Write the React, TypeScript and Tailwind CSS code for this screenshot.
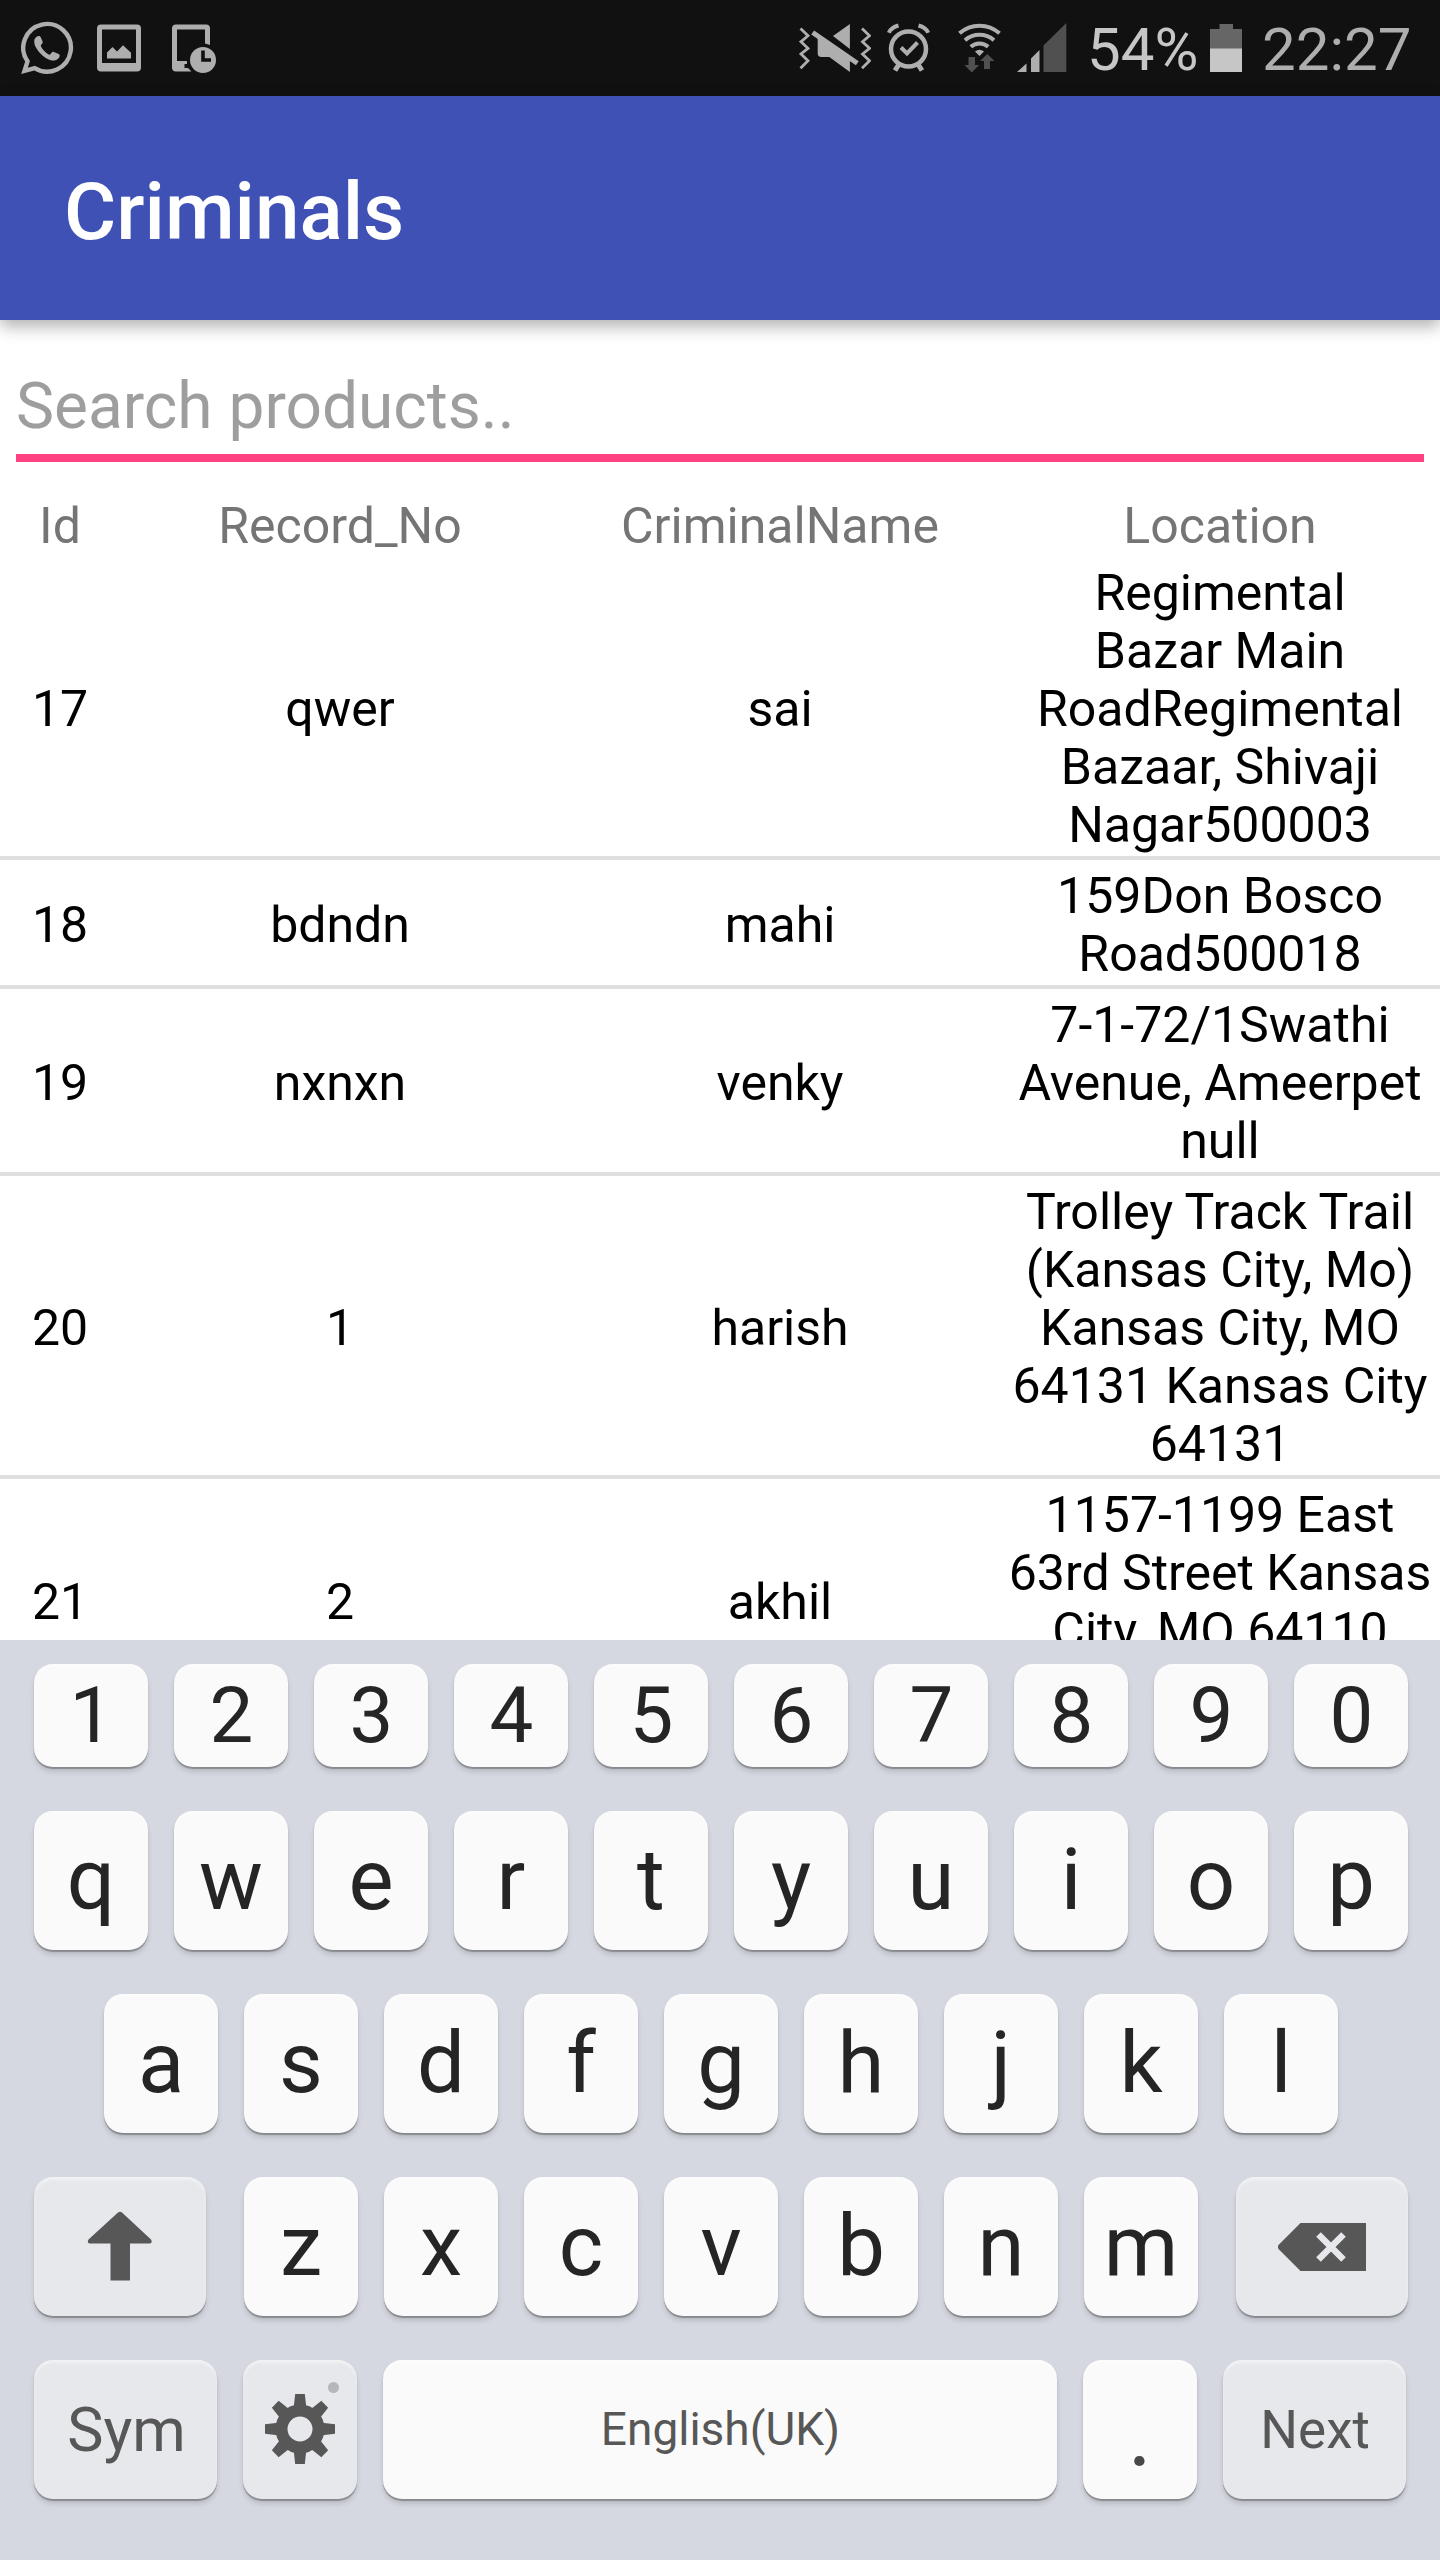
import React from "react";

const GREY = "#aeaeae";
const DIM = "#505050";

function WhatsappIcon() {
  return (
    <svg className="h-[54px] w-[54px]" viewBox="0 0 54 54" fill="none">
      <path
        d="M6.500 40.300A23.800 23.800 0 1 1 13.700 47.100L3.500 49.800Z"
        stroke={GREY}
        strokeWidth="4.400"
      />
      <path
        transform="translate(-0.7 1)"
        d="M16 15c-3 2-2.500 7 0 11 3.500 6 9 10.500 14.500 12.300 3.500 1 8.500-.8 8.900-4.600.1-1-.7-1.600-1.600-2l-4.300-1.700c-1.300-.5-2 .5-3 1.800-.8 1-1.500 1.100-2.600.4-3.300-2-6-5-7.200-7.700-.5-1.100.2-1.900 1-2.800.7-.8.900-1.600.5-2.500l-1.800-4c-.9-1.800-3-1.300-4.400-.2Z"
        fill={GREY}
      />
    </svg>
  );
}

function PictureIcon() {
  return (
    <svg className="h-[48px] w-[44px]" viewBox="0 0 44 48" fill={GREY}>
      <path
        fillRule="evenodd"
        d="M4 .5h36a4 4 0 0 1 4 4v39a4 4 0 0 1-4 4H4a4 4 0 0 1-4-4V4.500a4 4 0 0 1 4-4ZM5 5.500v33.500h34V5.500Z"
      />
      <path d="M10 28.500l5.500-5.500 4.500 4.500 6-6.300 8 7.500V34.500H10Z" />
    </svg>
  );
}

function DeviceClockIcon() {
  return (
    <svg className="h-[50px] w-[46px]" viewBox="0 0 46 50" fill={GREY}>
      <path d="M4 1.500h30a4 4 0 0 1 4 4v16.500l-5-1.500V6.500H5V38h10v3h-2.500v4H16l3.500 3.500H4a4 4 0 0 1-4-4v-39a4 4 0 0 1 4-4Z" />
      <circle cx="31" cy="37" r="13" />
      <path d="M31 27.500v9.500h8" fill="none" stroke="#111" strokeWidth="3.600" />
    </svg>
  );
}

function MuteIcon() {
  return (
    <svg className="h-[50px] w-[72px]" viewBox="0 0 72 50" fill={GREY}>
      <path
        d="M1.500 4.500 9 11.700 2 17.700 9 24.300 2 30 9 36.700 1.500 44.300M63 4.500 70.500 11.700 63.500 17.700 70.500 24.300 63.500 30 70.500 36.700 63 44.300"
        fill="none"
        stroke={GREY}
        strokeWidth="2.800"
      />
      <path d="M50.900 0v25L34 12Z" />
      <path d="M13.700 8.500 58.300 39.300" stroke={GREY} strokeWidth="5" />
      <path d="M18.700 14.500 21 12 50.900 34V48L30.300 33H22.500q-3.800 0-3.800-3.800Z" />
    </svg>
  );
}

function AlarmIcon() {
  return (
    <svg className="h-[50px] w-[44px]" viewBox="0 0 44 50" fill="none" stroke={GREY}>
      <circle cx="21.500" cy="26" r="17.500" strokeWidth="4.500" />
      <path d="M14 24.500l6 6 10.500-11" strokeWidth="4" />
      <path d="M1.800 9.800Q4 4.500 11.500 2.500M31.500 2.500Q39 4.500 41.200 9.800" strokeWidth="4" />
      <path d="M11.500 42l-3.500 5.500M31.500 42l3.500 5.500" strokeWidth="5" />
    </svg>
  );
}

function WifiIcon() {
  return (
    <svg className="h-[50px] w-[44px]" viewBox="0 0 44 50" fill="none" stroke={GREY}>
      <path d="M1.500 10.300a30 30 0 0 1 40 0" strokeWidth="4" />
      <path d="M7 17.300a22 22 0 0 1 29 0" strokeWidth="4" />
      <path d="M12.800 23.800a13 13 0 0 1 17.400 0" strokeWidth="4" />
      <path d="M17 28.500q4.500-3.500 9 0l-4.500 4.500Z" fill={GREY} stroke="none" />
      <path
        d="M10.500 34h6.500v8h4l-7.200 7.500L6.500 42h4ZM26 46h6V38h4.500L29.300 31 22 38h4Z"
        fill={DIM}
        stroke="none"
      />
    </svg>
  );
}

function SignalIcon() {
  return (
    <svg className="h-[49px] w-[50px]" viewBox="0 0 50 49">
      <path d="M0 49 9.500 40.500V49ZM14 35.500 22.500 27V49H14Z" fill={GREY} />
      <path d="M26.500 22.500 49.300 0V49H26.500Z" fill={DIM} />
    </svg>
  );
}

function BatteryIcon() {
  return (
    <svg className="h-[48px] w-[32px]" viewBox="0 0 32 48">
      <path d="M9.500 0h13.500v5h9v20H0V5h9.500Z" fill="#666" />
      <path d="M0 24.500h32V48H0Z" fill="#c6c6c6" />
    </svg>
  );
}

function StatusBar() {
  return (
    <div className="flex h-[96px] shrink-0 items-start bg-[#111] pl-[21px]">
      <div className="flex pt-[21px]">
        <WhatsappIcon />
      </div>
      <div className="ml-[22px] pt-[24px]">
        <PictureIcon />
      </div>
      <div className="ml-[31px] pt-[23px]">
        <DeviceClockIcon />
      </div>
      <div className="ml-[581px] pt-[24px]">
        <MuteIcon />
      </div>
      <div className="ml-[16px] pt-[23px]">
        <AlarmIcon />
      </div>
      <div className="ml-[27px] pt-[23px]">
        <WifiIcon />
      </div>
      <div className="ml-[15px] pt-[23px]">
        <SignalIcon />
      </div>
      <span className="ml-[20px] w-[118px] pt-[15px] text-[60px] leading-[70px] whitespace-nowrap text-[#c6c6c6]">
        54%
      </span>
      <div className="ml-[5px] pt-[24px]">
        <BatteryIcon />
      </div>
      <span className="ml-[20px] pt-[15px] text-[60px] leading-[70px] whitespace-nowrap text-[#aeaeae]">
        22:27
      </span>
    </div>
  );
}

const records = [
  { id: "17", no: "qwer", name: "sai", loc: ["Regimental", "Bazar Main", "RoadRegimental", "Bazaar, Shivaji", "Nagar500003"] },
  { id: "18", no: "bdndn", name: "mahi", loc: ["159Don Bosco", "Road500018"] },
  { id: "19", no: "nxnxn", name: "venky", loc: ["7-1-72/1Swathi", "Avenue, Ameerpet", "null"] },
  { id: "20", no: "1", name: "harish", loc: ["Trolley Track Trail", "(Kansas City, Mo)", "Kansas City, MO", "64131 Kansas City", "64131"] },
  { id: "21", no: "2", name: "akhil", loc: ["1157-1199 East", "63rd Street Kansas", "City, MO 64110"], tall: true },
];

const COLS = "grid grid-cols-[120px_440px_440px_440px] items-center text-center";

function Key({
  children,
  size = "w-[114px] h-[139px]",
  tone = "bg-[#fafafa] text-[#252525]",
  text = "text-[85px] leading-[100px] pt-[19px]",
}: {
  children?: React.ReactNode;
  size?: string;
  tone?: string;
  text?: string;
}) {
  return (
    <div
      className={`flex shrink-0 items-start justify-center rounded-[19px] shadow-[0_2px_1px_rgba(0,0,0,0.28),0_5px_5px_rgba(0,0,0,0.12),inset_0_3px_3px_rgba(255,255,255,0.45)] ${size} ${tone} ${text}`}
    >
      {children}
    </div>
  );
}

const FN = "bg-[#e6e8ec] text-[#575757]";

function Keyboard() {
  return (
    <div className="z-10 flex h-[920px] shrink-0 flex-col bg-[#d5d8e0] pt-[24px] pl-[34px]">
      <div className="flex gap-[26px]">
        {"1234567890".split("").map((k) => (
          <Key key={k} size="w-[114px] h-[103px]" text="text-[78px] leading-[90px] pt-[7px] pl-[1px]">
            {k}
          </Key>
        ))}
      </div>
      <div className="mt-[44px] flex gap-[26px]">
        {"qwertyuiop".split("").map((k) => (
          <Key key={k}>{k}</Key>
        ))}
      </div>
      <div className="mt-[44px] ml-[70px] flex gap-[26px]">
        {"asdfghjkl".split("").map((k) => (
          <Key key={k}>{k}</Key>
        ))}
      </div>
      <div className="mt-[44px] flex gap-[38px]">
        <Key size="w-[172px] h-[139px]" tone={FN} text="pt-[34px]">
          <svg className="h-[70px] w-[66px]" viewBox="0 0 66 70" fill="#575757">
            <path d="M31 1.500Q33 0 35 1.500L64 28.500Q66 32 62.500 32.500H43V69.500H23.500V32.500H3Q-.5 32 1.500 28.500Z" />
          </svg>
        </Key>
        <div className="flex gap-[26px]">
          {"zxcvbnm".split("").map((k) => (
            <Key key={k}>{k}</Key>
          ))}
        </div>
        <Key size="w-[172px] h-[139px]" tone={FN} text="pt-[46px]">
          <svg className="h-[48px] w-[88px]" viewBox="0 0 88 48">
            <path d="M22.500 0H88V48H22.500L.5 26Q-.8 24 .5 22Z" fill="#575757" />
            <path d="M40.500 11.500 65.500 36.500M65.500 11.500 40.500 36.500" stroke="#e6e8ec" strokeWidth="6.500" />
          </svg>
        </Key>
      </div>
      <div className="mt-[44px] flex gap-[26px]">
        <Key size="w-[183px] h-[139px]" tone={FN} text="text-[61px] leading-[72px] pt-[34px] pl-[2px]">
          Sym
        </Key>
        <Key size="w-[114px] h-[139px]" tone={FN} text="relative pt-[34px]">
          <span className="absolute top-[22px] right-[18px] h-[11px] w-[11px] rounded-full bg-[#b5b7bb]" />
          <svg className="h-[70px] w-[70px]" viewBox="-35 -35 70 70">
            {[0, 45, 90, 135, 180, 225, 270, 315].map((a) => (
              <path key={a} d="M-4.800-35H4.800L6.500-20H-6.500Z" fill="#575757" transform={`rotate(${a})`} />
            ))}
            <circle r="18.500" fill="none" stroke="#575757" strokeWidth="12" />
          </svg>
        </Key>
        <Key size="w-[674px] h-[139px]" tone="bg-[#fafafa] text-[#575757]" text="text-[46px] leading-[54px] pt-[42px] pl-[1px]">
          English(UK)
        </Key>
        <Key tone="bg-[#fafafa] text-[#484848]" text="text-[92px] leading-[108px] pt-[20px]">
          .
        </Key>
        <Key size="w-[183px] h-[139px]" tone={FN} text="text-[53px] leading-[64px] pt-[38px] pl-[1px]">
          Next
        </Key>
      </div>
    </div>
  );
}

export default function App() {
  return (
    <div className="flex h-[2560px] w-[1440px] flex-col overflow-hidden bg-white font-['Roboto',sans-serif]">
      <StatusBar />
      <header className="z-10 flex h-[224px] shrink-0 bg-[#3f51b5] pt-[69px] pl-[64px] shadow-[0_6px_16px_rgba(0,0,0,0.32)]">
        <h1 className="text-[80px] leading-[94px] font-medium text-white">Criminals</h1>
      </header>
      <main className="flex h-[1320px] shrink-0 flex-col overflow-hidden">
        <div className="mx-[16px] flex h-[142px] shrink-0 items-end border-b-8 border-[#ff4081]">
          <span className="pb-[9px] text-[64px] leading-[76px] text-[#9e9e9e]">Search products..</span>
        </div>
        <div className={`mt-[33px] h-[62px] shrink-0 pb-[1px] text-[50px] leading-[58px] text-[#757575] ${COLS}`}>
          <span>Id</span>
          <span>Record_No</span>
          <span>CriminalName</span>
          <span>Location</span>
        </div>
        {records.map((r) => (
          <div
            key={r.id}
            className={`shrink-0 border-b-4 border-[#dfdfdf] pt-[7px] pb-[2px] text-[50px] leading-[58px] text-black ${COLS}`}
          >
            <span>{r.id}</span>
            <span>{r.no}</span>
            <span>{r.name}</span>
            <div className={`flex flex-col ${r.tall ? "pb-[58px]" : ""}`}>
              {r.loc.map((l) => (
                <span key={l} className="whitespace-nowrap">
                  {l}
                </span>
              ))}
            </div>
          </div>
        ))}
      </main>
      <Keyboard />
    </div>
  );
}
